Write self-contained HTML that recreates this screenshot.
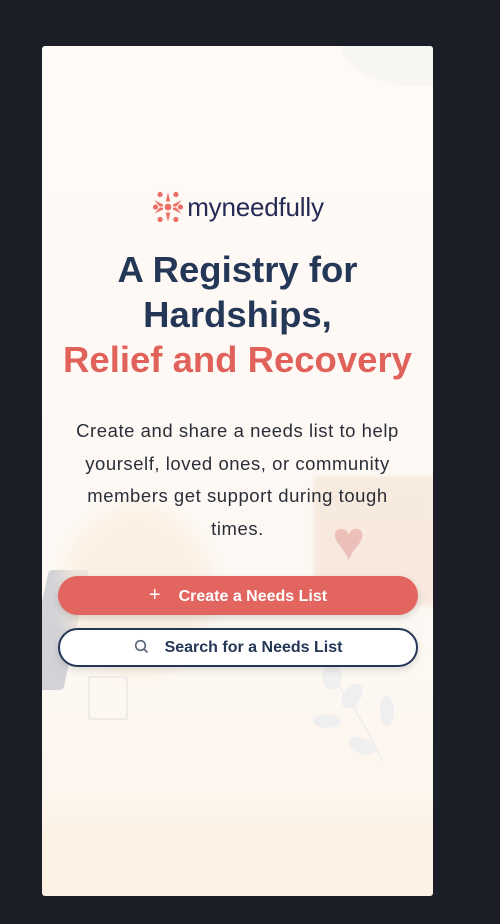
<!DOCTYPE html>
<html><head><meta charset="utf-8"><style>
html,body{margin:0;padding:0;background:#1b1e26;width:500px;height:924px;overflow:hidden}
.card{position:absolute;left:42px;top:46px;width:391px;height:850px;border-radius:3px;overflow:hidden;
background:linear-gradient(#fefaf6 0,#fdf8f3 70%,#fdf6ee 88%,#fcf2e4 93%,#fcf1e2 100%);font-family:"Liberation Sans",sans-serif}
.blob{position:absolute;border-radius:50%}
.logo{position:absolute;top:144px;left:0;width:391px;text-align:center;font-size:26px;color:#252a56;letter-spacing:-0.2px}
h1{position:absolute;top:201px;left:0;width:391px;margin:0;text-align:center;font-size:36.5px;line-height:45px;font-weight:bold;color:#243757}
h1 span{color:#e0625a}
p{position:absolute;top:369px;left:22px;width:347px;margin:0;text-align:center;font-size:18.5px;line-height:32.5px;color:#2a2e38;letter-spacing:0.55px}
.btn{position:absolute;left:16px;width:360px;height:39px;border-radius:20px;box-sizing:border-box;text-align:center;font-size:16px;font-weight:bold;line-height:39px}
.b1{top:530px;background:#e26560;color:#fff;box-shadow:0 3px 8px rgba(0,0,0,.15)}
.b2{top:582px;background:#fff;border:2px solid #243757;color:#243757;line-height:35px;box-shadow:0 3px 8px rgba(0,0,0,.12)}
</style></head><body>
<div class="card">
 <div class="blob" style="left:300px;top:-40px;width:150px;height:80px;background:#f8f6f3"></div>
 <div style="position:absolute;left:-6px;top:524px;width:40px;height:120px;background:#c3c6cd;opacity:.75;transform:skewX(-12deg);border-radius:4px"></div>
 <div class="blob" style="left:20px;top:460px;width:150px;height:170px;background:#fbeede;opacity:.7;filter:blur(8px)"></div>
 <div style="position:absolute;left:272px;top:430px;width:120px;height:130px;background:#f2dccb;opacity:.5;filter:blur(2px)"></div>
 <div style="position:absolute;left:290px;top:462px;font-size:56px;color:#eab2ad;opacity:.75">&#9829;</div>
 <div style="position:absolute;left:46px;top:630px;width:36px;height:40px;border:2px solid #eeebe8;border-radius:2px"></div>
 <svg style="position:absolute;left:270px;top:620px" width="121" height="110" viewBox="0 0 121 110"><g fill="#ebedf0" opacity=".7"><ellipse cx="20" cy="10" rx="10" ry="14"/><ellipse cx="40" cy="30" rx="9" ry="14" transform="rotate(30 40 30)"/><ellipse cx="15" cy="55" rx="14" ry="7"/><ellipse cx="75" cy="45" rx="7" ry="16"/><ellipse cx="50" cy="80" rx="14" ry="8" transform="rotate(20 50 80)"/><path d="M20 10 Q50 50 70 95" stroke="#ebedf0" stroke-width="2" fill="none"/></g></svg>
 <div class="logo"><svg width="34" height="34" viewBox="0 0 30 30" style="vertical-align:-8px;margin-right:2px"><g fill="#ee6f66"><circle cx="15" cy="15" r="3"/><circle cx="8" cy="4" r="2.3"/><circle cx="22" cy="4" r="2.3"/><circle cx="4" cy="15" r="2.3"/><circle cx="26" cy="15" r="2.3"/><circle cx="8" cy="26" r="2.3"/><circle cx="22" cy="26" r="2.3"/><path d="M15 2l2 8h-4zM15 28l2-8h-4zM3 9l8 4-2 3zM27 9l-8 4 2 3zM3 21l8-4-2-3zM27 21l-8-4 2-3z"/></g></svg>myneedfully</div>
 <h1>A Registry for<br>Hardships,<br><span>Relief and Recovery</span></h1>
 <p>Create and share a needs list to help yourself, loved ones, or community members get support during tough times.</p>
 <div class="btn b1"><span style="font-weight:normal;font-size:20px;margin-right:18px">+</span>Create a Needs List</div>
 <div class="btn b2"><svg width="15" height="15" viewBox="0 0 15 15" style="vertical-align:-2px;margin-right:16px"><circle cx="6.5" cy="6.5" r="4.8" fill="none" stroke="#5a6478" stroke-width="1.6"/><path d="M10 10l3.5 3.5" stroke="#5a6478" stroke-width="1.6"/></svg>Search for a Needs List</div>
</div>
</body></html>
